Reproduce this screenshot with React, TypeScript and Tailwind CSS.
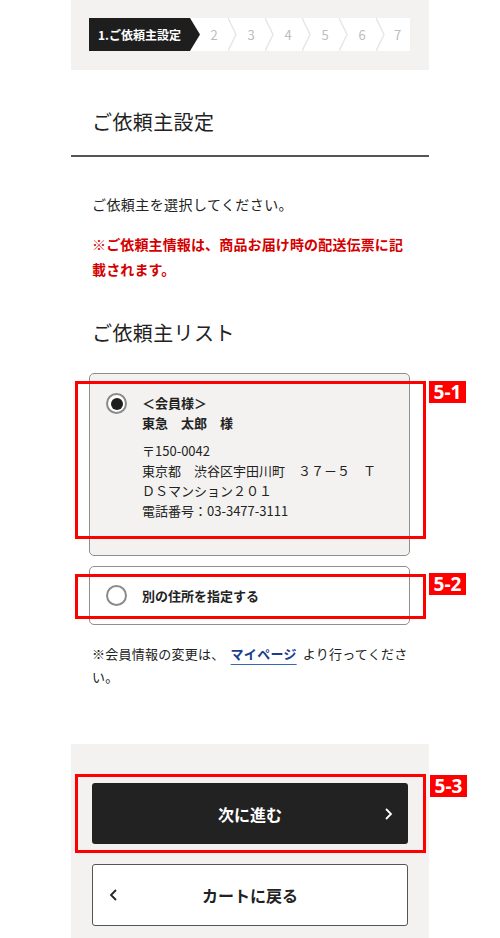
import React from 'react';

const font = "font-['Noto_Sans_CJK_JP','Noto_Sans',sans-serif]";

const Chevron = () => (
  <svg width="9" height="33" viewBox="0 0 9 33" className="shrink-0">
    <polyline points="0,0 8,16.5 0,33" fill="none" stroke="#e8e7e4" strokeWidth="1.5" />
  </svg>
);

const Stepper: React.FC = () => {
  const steps = ['2', '3', '4', '5', '6', '7'];
  return (
    <div className="bg-[#f3f2f0] h-[70px] pt-[18px] pl-[18px] pr-[19px]">
      <div className="flex h-[33px] bg-white">
        <div className="flex items-center justify-center w-[101px] bg-[#1e1e1e] text-white text-[12px] font-bold">
          1.ご依頼主設定
        </div>
        <svg width="10" height="33" viewBox="0 0 10 33" className="shrink-0">
          <polygon points="0,0 10,16.5 0,33" fill="#1e1e1e" />
        </svg>
        {steps.map((s, i) => (
          <React.Fragment key={s}>
            <div className={`flex items-center justify-center text-[13px] text-[#bdbdbd] ${i === steps.length - 1 ? 'flex-1' : 'w-[28px]'}`}>
              {s}
            </div>
            {i < steps.length - 1 && <Chevron />}
          </React.Fragment>
        ))}
      </div>
    </div>
  );
};

const Radio = ({ checked }: { checked: boolean }) => (
  <span className="flex items-center justify-center w-[21px] h-[21px] rounded-full border-2 border-[#8a8a8a] bg-white shrink-0">
    {checked && <span className="w-[12px] h-[12px] rounded-full bg-[#1e1e1e]" />}
  </span>
);

// red annotation box + its label, laid over the element
const Mark = ({ label, box, tag }: { label: string; box: string; tag: string }) => (
  <>
    <div className={`absolute border-[3px] border-[#ff0000] pointer-events-none ${box}`} />
    <div className={`absolute w-[37px] h-[22px] bg-[#ff0000] text-white font-bold text-[19px] leading-[22px] text-center font-['Noto_Sans','Liberation_Sans',sans-serif] ${tag}`}>
      {label}
    </div>
  </>
);

export default function App() {
  return (
    <div className={`w-[500px] min-h-[938px] bg-white text-[#222] ${font}`}>
      <div className="ml-[71px] w-[358px]">
        <Stepper />

        <h2 className="px-[21px] pt-[37px] pb-[18px] text-[20px] leading-[30px] tracking-[0.02em]">ご依頼主設定</h2>
        <div className="h-[2px] bg-[#555]" />

        <div className="px-[21px]">
          <p className="mt-[35px] text-[14px] leading-[24px] tracking-[0.03em]">ご依頼主を選択してください。</p>
          <p className="mt-[16px] text-[14px] leading-[25px] font-bold text-[#d40000] tracking-[0.01em]">
            ※ご依頼主情報は、商品お届け時の配送伝票に記載されます。
          </p>
          <h3 className="mt-[36px] text-[20px] leading-[30px] tracking-[0.02em]">ご依頼主リスト</h3>
        </div>

        <div className="pl-[18px] pr-[19px] mt-[25px] flex flex-col gap-[10px]">
          <div className="relative h-[183px] rounded-[5px] border border-[#8f8f8f] bg-[#f3f2f0]">
            <Mark label="5-1" box="-left-[15px] -right-[17px] top-[7px] h-[158px]" tag="-right-[57px] top-[7px]" />
            <div className="flex gap-[15px] pl-[16px] pt-[19px]">
              <Radio checked />
              <div className="text-[13px] leading-[20px]">
                <p className="font-bold">＜会員様＞</p>
                <p className="font-bold">東急　太郎　様</p>
                <p className="mt-[8px]">〒150-0042</p>
                <p>東京都　渋谷区宇田川町　３７－５　Ｔ</p>
                <p>ＤＳマンション２０１</p>
                <p>電話番号：03-3477-3111</p>
              </div>
            </div>
          </div>

          <div className="relative h-[59px] rounded-[5px] border border-[#8f8f8f] bg-white flex items-center gap-[15px] pl-[16px]">
            <Mark label="5-2" box="-left-[15px] -right-[17px] top-[7px] h-[45px]" tag="-right-[57px] top-[6px]" />
            <Radio checked={false} />
            <span className="text-[13px] font-bold">別の住所を指定する</span>
          </div>
        </div>

        <p className="px-[21px] mt-[17px] text-[13px] leading-[23px] tracking-[0.02em]">
          ※会員情報の変更は、
          <a className="mx-[6px] font-bold text-[#1a3d8f] underline decoration-[#3a66b8] underline-offset-[5px]">マイページ</a>
          より行ってください。
        </p>

        <div className="mt-[56px] bg-[#f3f2f0] h-[195px] px-[21px] pt-[39px] flex flex-col gap-[20px]">
          <div className="relative">
            <Mark label="5-3" box="-left-[17px] -right-[18px] -top-[9px] -bottom-[9px]" tag="-right-[59px] -top-[8px]" />
            <button className="w-full h-[61px] rounded-[3px] bg-[#222] text-white text-[16px] font-bold relative flex items-center justify-center">
              次に進む
              <svg className="absolute right-[14px]" width="10" height="14" viewBox="0 0 10 14">
                <polyline points="2,2 7,7 2,12" fill="none" stroke="#fff" strokeWidth="1.8" />
              </svg>
            </button>
          </div>
          <button className="w-full h-[62px] rounded-[3px] bg-white border border-[#555] text-[#222] text-[16px] font-bold relative flex items-center justify-center">
            <svg className="absolute left-[15px]" width="10" height="14" viewBox="0 0 10 14">
              <polyline points="8,2 3,7 8,12" fill="none" stroke="#222" strokeWidth="1.8" />
            </svg>
            カートに戻る
          </button>
        </div>
      </div>
    </div>
  );
}
